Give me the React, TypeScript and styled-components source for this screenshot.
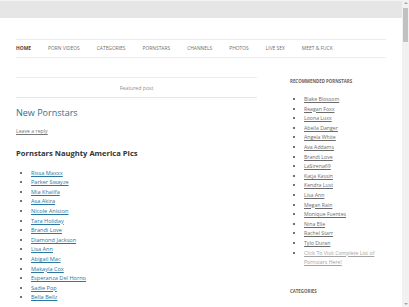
import * as React from 'react';
import styled, { createGlobalStyle } from 'styled-components';

const GlobalStyle = createGlobalStyle`
    html, body {
        margin: 0;
        padding: 0;
        background: #fff;
    }
    body {
        font-family: 'Open Sans', 'Liberation Sans', sans-serif;
        color: #444;
    }
`;

const Screen = styled.div`
    display: flex;
    width: 409px;
    height: 307px;
    overflow: hidden;
`;

const Page = styled.div`
    flex: 1;
    min-width: 0;
`;

const TopBar = styled.div`
    height: 17px;
    background: #e6e6e6;
    border-top: 1px solid #f4f4f4;
`;

const Site = styled.div`
    padding: 21px 16px 0 16px;
    width: 370px;
`;

const Nav = styled.ul`
    display: flex;
    margin: 0;
    padding: 0;
    list-style: none;
    height: 17px;
    border-top: 1px solid #ededed;
    border-bottom: 1px solid #ededed;
`;

const NavItem = styled.li<{ $active?: boolean; $gap: number }>`
    font-size: 4.9px;
    line-height: 17px;
    text-transform: uppercase;
    margin-right: ${(p) => p.$gap}px;
    color: ${(p) => (p.$active ? '#444' : '#6d6d6d')};
    font-weight: ${(p) => (p.$active ? 700 : 400)};
    white-space: nowrap;
`;

const Columns = styled.div`
    display: flex;
    justify-content: space-between;
`;

const Content = styled.main`
    width: 241px;
    padding-top: 19px;
`;

const FeaturedBar = styled.div`
    height: 19px;
    border-top: 1px solid #ececec;
    border-bottom: 1px solid #f1e3e3;
    display: flex;
    align-items: center;
    justify-content: center;
    font-size: 5.2px;
    color: #8f8f8f;
`;

const EntryTitle = styled.h1`
    margin: 9px 0 0;
    font-size: 9px;
    line-height: 12px;
    font-weight: 400;
    color: #2d7092;
`;

const ReplyLink = styled.a`
    display: block;
    margin-top: 8px;
    font-size: 5.2px;
    line-height: 9.6px;
    color: #757575;
    text-decoration: underline;
`;

const SubHeading = styled.h2`
    margin: 10px 0 0;
    font-size: 7.6px;
    line-height: 12px;
    font-weight: 700;
    color: #333;
`;

const List = styled.ul<{ $top: number; $indent: number }>`
    margin: ${(p) => p.$top}px 0 0;
    padding-left: ${(p) => p.$indent}px;
    list-style: disc;
`;

const Item = styled.li<{ $size: number; $color: string }>`
    font-size: ${(p) => p.$size}px;
    line-height: 9.6px;
    color: #444;

    a {
        color: ${(p) => p.$color};
        text-decoration: underline;
    }
`;

const Sidebar = styled.aside`
    width: 96px;
    padding-top: 18px;
`;

const WidgetTitle = styled.h3<{ $top?: number }>`
    margin: ${(p) => p.$top ?? 0}px 0 0;
    font-size: 4.4px;
    line-height: 10px;
    font-weight: 700;
    text-transform: uppercase;
    color: #636363;
`;

const Scrollbar = styled.div`
    width: 7px;
    background: #f1f1f1;
    display: flex;
    flex-direction: column;
    align-items: center;
`;

const Arrow = styled.div<{ $down?: boolean }>`
    width: 0;
    height: 0;
    margin: 2px 0;
    border-left: 2px solid transparent;
    border-right: 2px solid transparent;
    ${(p) =>
        p.$down ? 'border-top: 2px solid #a3a3a3;' : 'border-bottom: 2px solid #a3a3a3;'}
`;

const Thumb = styled.div`
    width: 5px;
    height: 34px;
    margin-top: 2px;
    background: #c1c1c1;
`;

const Track = styled.div`
    flex: 1;
`;

const navItems: [string, number][] = [
    ['Home', 17],
    ['Porn Videos', 17],
    ['Categories', 17],
    ['Pornstars', 17],
    ['Channels', 17],
    ['Photos', 17],
    ['Live Sex', 17],
    ['Meet & Fuck', 0],
];

const pornstars = [
    'Rissa Maxxx',
    'Parker Swayze',
    'Mia Khalifa',
    'Asa Akira',
    'Nicole Aniston',
    'Tara Holiday',
    'Brandi Love',
    'Diamond Jackson',
    'Lisa Ann',
    'Abigail Mac',
    'Makayla Cox',
    'Esperanza Del Horno',
    'Sadie Pop',
    'Bella Bellz',
];

const recommended = [
    'Blake Blossom',
    'Reagan Foxx',
    'Loona Luxx',
    'Abella Danger',
    'Angela White',
    'Ava Addams',
    'Brandi Love',
    'LaSirena69',
    'Katja Kassin',
    'Kendra Lust',
    'Lisa Ann',
    'Megan Rain',
    'Monique Fuentes',
    'Nina Elle',
    'Rachel Starr',
    'Tylo Duran',
];

const App: React.FunctionComponent = () => {
    return (
        <>
            <GlobalStyle />
            <Screen>
                <Page>
                    <TopBar />
                    <Site>
                        <Nav>
                            {navItems.map(([label, gap], i) => (
                                <NavItem key={label} $active={i === 0} $gap={gap}>
                                    {label}
                                </NavItem>
                            ))}
                        </Nav>
                        <Columns>
                            <Content>
                                <FeaturedBar>Featured post</FeaturedBar>
                                <EntryTitle>New Pornstars</EntryTitle>
                                <ReplyLink>Leave a reply</ReplyLink>
                                <SubHeading>Pornstars Naughty America Pics</SubHeading>
                                <List $top={10} $indent={15}>
                                    {pornstars.map((name) => (
                                        <Item key={name} $size={5.6} $color="#2a78a0">
                                            <a>{name}</a>
                                        </Item>
                                    ))}
                                </List>
                            </Content>
                            <Sidebar>
                                <WidgetTitle>Recommended Pornstars</WidgetTitle>
                                <List $top={9} $indent={14}>
                                    {recommended.map((name) => (
                                        <Item key={name} $size={5.2} $color="#6b6b6b">
                                            <a>{name}</a>
                                        </Item>
                                    ))}
                                    <Item $size={5.2} $color="#a3a3a3">
                                        <a>Click To Visit Complete List of Pornstars Here!</a>
                                    </Item>
                                </List>
                                <WidgetTitle $top={18}>Categories</WidgetTitle>
                            </Sidebar>
                        </Columns>
                    </Site>
                </Page>
                <Scrollbar>
                    <Arrow />
                    <Thumb />
                    <Track />
                    <Arrow $down />
                </Scrollbar>
            </Screen>
        </>
    );
};

export default App;
